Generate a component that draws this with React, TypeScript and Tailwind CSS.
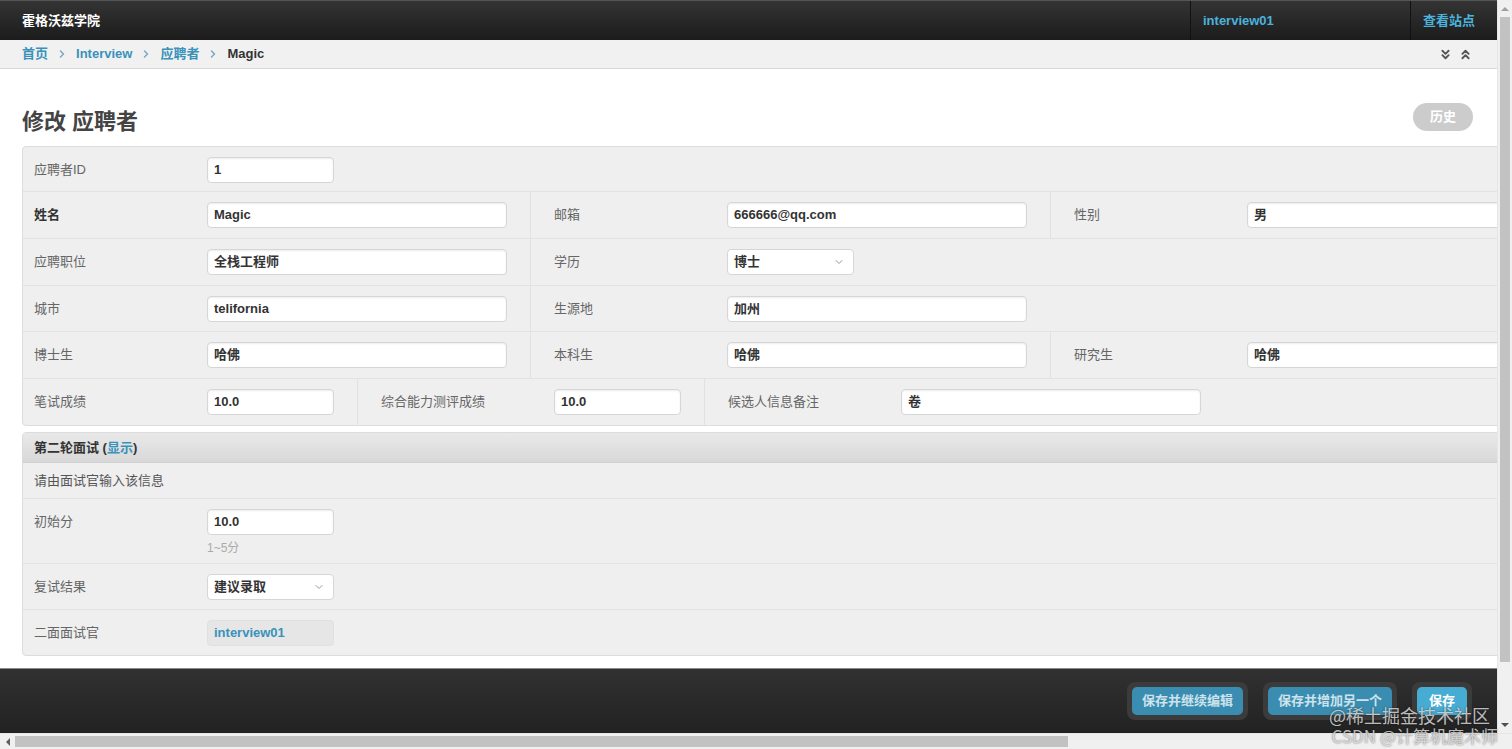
import React from "react";
import { ChevronsDown, ChevronsUp, ChevronDown, ChevronRight } from "lucide-react";

const font = { fontFamily: '"Liberation Sans", Arial, "Noto Sans CJK SC", sans-serif' };

function Input({ value, w }: { value: string; w: string }) {
  return (
    <div
      className={`${w} h-[26px] bg-white border border-[#d6d6d6] rounded-[4px] shadow-[inset_0_1px_2px_rgba(0,0,0,0.08)] flex items-center pl-[6px] text-[13px] font-bold text-[#333] overflow-hidden whitespace-nowrap`}
    >
      {value}
    </div>
  );
}

function Select({ value }: { value: string }) {
  return (
    <div className="w-[127px] h-[26px] bg-white border border-[#d6d6d6] rounded-[4px] flex items-center justify-between pl-[6px] pr-[8px] text-[13px] font-bold text-[#333]">
      <span>{value}</span>
      <ChevronDown size={12} strokeWidth={2} className="text-[#999]" />
    </div>
  );
}

type F = { label: string; value: string; w?: string; bold?: boolean; select?: boolean };

function Field({ f, first }: { f: F; first: boolean }) {
  return (
    <div
      className={`flex items-start pt-[10px] pr-[23px] ${first ? "pl-[11px]" : "pl-[23px] border-l border-[#e2e2e2]"}`}
    >
      <div className={`w-[173px] leading-[26px] text-[13px] ${f.bold ? "font-bold text-[#333]" : "text-[#666]"}`}>
        {f.label}
      </div>
      {f.select ? <Select value={f.value} /> : <Input value={f.value} w={f.w ?? "w-[300px]"} />}
    </div>
  );
}

function Row({ fields, h }: { fields: F[]; h: string }) {
  return (
    <div className={`flex ${h} border-b border-[#e2e2e2]`}>
      {fields.map((f, i) => (
        <Field key={i} f={f} first={i === 0} />
      ))}
    </div>
  );
}

function SubmitBtn({ label, primary }: { label: string; primary?: boolean }) {
  return (
    <div className="p-[5px] rounded-[8px] bg-[#3b3b3b]">
      <div
        className={`h-[28px] flex items-center rounded-[5px] text-[13px] font-bold ${
          primary ? "px-[12px] bg-[#47acd3] text-white" : "px-[10px] bg-[#3a8db0] text-[#cde3ec]"
        }`}
      >
        {label}
      </div>
    </div>
  );
}

export default function App() {
  return (
    <div className="relative w-[1512px] h-[749px] flex flex-col overflow-hidden bg-white" style={font}>
      <div className="flex flex-1 min-h-0">
        <div className="w-[1497px] flex flex-col overflow-hidden">
          {/* header */}
          <div className="h-[40px] shrink-0 flex items-stretch bg-gradient-to-b from-[#343434] to-[#1c1c1c] border-t border-[#555]">
            <div className="flex-1 flex items-center pl-[22px] text-white font-bold text-[13px]">霍格沃兹学院</div>
            <div className="w-[220px] flex items-center pl-[12px] border-l border-[#111] text-[13px] font-bold text-[#4ab3dc]">
              interview01
            </div>
            <div className="w-[87px] flex items-center pl-[12px] border-l border-[#111] text-[13px] font-bold text-[#4ab3dc]">
              查看站点
            </div>
          </div>
          {/* breadcrumb */}
          <div className="h-[29px] shrink-0 flex items-center bg-[#f1f1f1] border-b border-[#d8d8d8] pl-[22px] pr-[24px] text-[13px] font-bold">
            <span className="text-[#3a91ba]">首页</span>
            <ChevronRight size={12} strokeWidth={3} className="mx-[8px] text-[#7aa9c0]" />
            <span className="text-[#3a91ba]">Interview</span>
            <ChevronRight size={12} strokeWidth={3} className="mx-[8px] text-[#7aa9c0]" />
            <span className="text-[#3a91ba]">应聘者</span>
            <ChevronRight size={12} strokeWidth={3} className="mx-[8px] text-[#7aa9c0]" />
            <span className="text-[#333]">Magic</span>
            <div className="flex-1" />
            <ChevronsDown size={15} strokeWidth={3} className="text-[#555]" />
            <ChevronsUp size={15} strokeWidth={3} className="ml-[5px] text-[#555]" />
          </div>
          {/* content */}
          <div className="flex-1 min-h-0 flex flex-col">
            <div className="flex items-start justify-between pt-[34px] pl-[22px] pr-[24px] h-[77px] shrink-0">
              <div className="mt-[4px] text-[22px] leading-[30px] font-bold text-[#444]">修改 应聘者</div>
              <div className="w-[60px] h-[28px] rounded-full bg-[#cccccc] flex items-center justify-center text-white font-bold text-[13px]">
                历史
              </div>
            </div>
            <div className="ml-[22px] w-[1540px] shrink-0 bg-[#efefef] border border-[#dcdcdc] rounded-tl-[4px] rounded-bl-[4px]">
              <Row h="h-[45px]" fields={[{ label: "应聘者ID", value: "1", w: "w-[127px]" }]} />
              <Row
                h="h-[47px]"
                fields={[
                  { label: "姓名", value: "Magic", bold: true },
                  { label: "邮箱", value: "666666@qq.com" },
                  { label: "性别", value: "男" },
                ]}
              />
              <Row
                h="h-[47px]"
                fields={[
                  { label: "应聘职位", value: "全栈工程师" },
                  { label: "学历", value: "博士", select: true },
                ]}
              />
              <Row
                h="h-[46px]"
                fields={[
                  { label: "城市", value: "telifornia" },
                  { label: "生源地", value: "加州" },
                ]}
              />
              <Row
                h="h-[47px]"
                fields={[
                  { label: "博士生", value: "哈佛" },
                  { label: "本科生", value: "哈佛" },
                  { label: "研究生", value: "哈佛" },
                ]}
              />
              <div className="flex h-[46px]">
                <Field f={{ label: "笔试成绩", value: "10.0", w: "w-[127px]" }} first />
                <Field f={{ label: "综合能力测评成绩", value: "10.0", w: "w-[127px]" }} first={false} />
                <Field f={{ label: "候选人信息备注", value: "卷" }} first={false} />
              </div>
            </div>
            <div className="mt-[6px] ml-[22px] w-[1540px] shrink-0 bg-[#efefef] border border-[#dcdcdc] rounded-tl-[4px] rounded-bl-[4px]">
              <div className="h-[30px] flex items-center pl-[11px] bg-gradient-to-b from-[#e9e9e9] to-[#d8d8d8] border-b border-[#cfcfcf] text-[13px] font-bold text-[#333]">
                第二轮面试 (<span className="text-[#3a91ba]">显示</span>)
              </div>
              <div className="h-[36px] flex items-center pl-[11px] border-b border-[#e2e2e2] text-[13px] text-[#555]">
                请由面试官输入该信息
              </div>
              <div className="h-[65px] flex items-start pt-[10px] pl-[11px] border-b border-[#e2e2e2]">
                <div className="w-[173px] leading-[26px] text-[13px] text-[#666]">初始分</div>
                <div className="flex flex-col">
                  <Input value="10.0" w="w-[127px]" />
                  <div className="mt-[4px] text-[12px] text-[#aaa]">1~5分</div>
                </div>
              </div>
              <div className="h-[46px] flex items-start pt-[10px] pl-[11px] border-b border-[#e2e2e2]">
                <div className="w-[173px] leading-[26px] text-[13px] text-[#666]">复试结果</div>
                <Select value="建议录取" />
              </div>
              <div className="h-[45px] flex items-start pt-[10px] pl-[11px]">
                <div className="w-[173px] leading-[26px] text-[13px] text-[#666]">二面面试官</div>
                <div className="w-[127px] h-[26px] rounded-[4px] bg-[#e6e6e6] border border-[#e0e0e0] flex items-center pl-[6px] text-[13px] font-bold text-[#3a91ba]">
                  interview01
                </div>
              </div>
            </div>
            <div className="flex-1" />
          </div>
          {/* footer */}
          <div className="h-[65px] shrink-0 flex items-center justify-end gap-[15px] pr-[25px] bg-gradient-to-b from-[#313131] to-[#222] border-t border-[#8a8a8a]">
            <SubmitBtn label="保存并继续编辑" />
            <SubmitBtn label="保存并增加另一个" />
            <SubmitBtn label="保存" primary />
          </div>
        </div>
        {/* vertical scrollbar */}
        <div className="w-[15px] flex flex-col bg-[#f0f0f0] border-l border-[#e6e6e6]">
          <div className="h-[17px] flex items-center justify-center">
            <div className="w-0 h-0 border-l-[4px] border-r-[4px] border-b-[4px] border-l-transparent border-r-transparent border-b-[#a0a0a0]" />
          </div>
          <div className="mx-[2px] h-[645px] bg-[#c2c2c2]" />
          <div className="flex-1" />
          <div className="h-[17px] flex items-center justify-center">
            <div className="w-0 h-0 border-l-[4px] border-r-[4px] border-t-[4px] border-l-transparent border-r-transparent border-t-[#505050]" />
          </div>
        </div>
      </div>
      {/* horizontal scrollbar */}
      <div className="h-[16px] shrink-0 flex items-center bg-[#f0f0f0] border-t border-[#e6e6e6]">
        <div className="w-[15px] flex items-center justify-center">
          <div className="w-0 h-0 border-t-[4px] border-b-[4px] border-r-[4px] border-t-transparent border-b-transparent border-r-[#606060]" />
        </div>
        <div className="w-[1053px] h-[11px] bg-[#c2c2c2]" />
      </div>
      {/* watermark */}
      <div className="absolute right-[22px] bottom-[24px] text-[18px] leading-[20px] text-[#e8e8e8]/80 [text-shadow:0_0_2px_rgba(0,0,0,0.6)] pointer-events-none" style={{ fontFamily: '"Noto Sans CJK SC", sans-serif' }}>
        @稀土掘金技术社区
      </div>
      <div className="absolute right-[14px] bottom-[3px] text-[17px] leading-[20px] text-[#e8e8e8]/80 [text-shadow:0_0_2px_rgba(0,0,0,0.6)] pointer-events-none" style={{ fontFamily: '"Noto Sans CJK SC", sans-serif' }}>
        CSDN @计算机魔术师
      </div>
    </div>
  );
}
